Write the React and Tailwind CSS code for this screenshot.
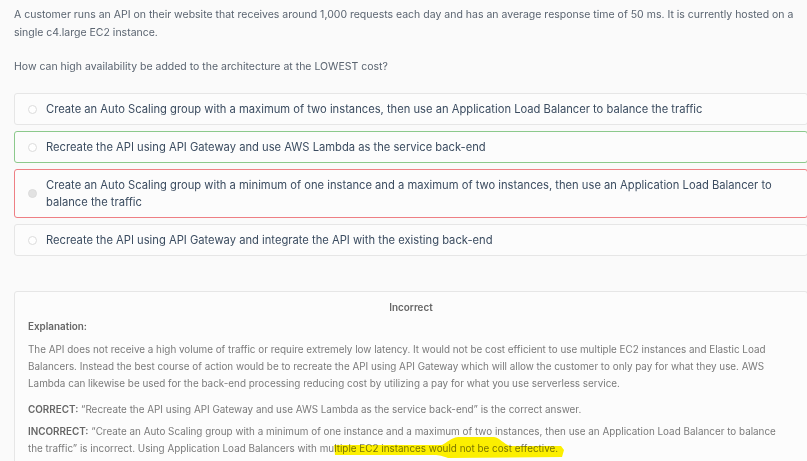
import React from 'react';

const options = [
    { text: 'Create an Auto Scaling group with a maximum of two instances, then use an Application Load Balancer to balance the traffic', state: 'none' },
    { text: 'Recreate the API using API Gateway and use AWS Lambda as the service back-end', state: 'correct' },
    { text: 'Create an Auto Scaling group with a minimum of one instance and a maximum of two instances, then use an Application Load Balancer to balance the traffic', state: 'wrong' },
    { text: 'Recreate the API using API Gateway and integrate the API with the existing back-end', state: 'none' },
];

const borderFor = {
    none: 'border-[#e6e6e6]',
    correct: 'border-[#8cc98c]',
    wrong: 'border-[#ee7f84]',
};

const App = () => {
    return (
        <div className="h-[461px] bg-[#fafafa] pl-[14px] pt-[6px] font-['Inter','Liberation_Sans',sans-serif] overflow-hidden">
            <p className="text-[10.5px] leading-[18px] text-[#5a6470] pr-2">
                A customer runs an API on their website that receives around 1,000 requests each day and has an average response time of 50 ms. It is currently hosted on a single c4.large EC2 instance.
            </p>
            <p className="mt-[16px] text-[10.5px] leading-[18px] text-[#5a6470]">
                How can high availability be added to the architecture at the LOWEST cost?
            </p>

            <div className="mt-[17px] flex flex-col gap-[6px] -mr-px">
                {options.map((o, i) => (
                    <div key={i} className={`flex items-center rounded-[3px] border bg-[#fcfcfc] pl-[13px] pr-4 py-[6.5px] ${borderFor[o.state]}`}>
                        <span className={`h-[9px] w-[9px] shrink-0 rounded-full border border-[#dcdcdc] ${o.state === 'wrong' ? 'bg-[#e2e2e2]' : 'bg-white'}`} />
                        <span className="ml-[9px] text-[11.2px] leading-[17px] text-[#3b4c60]">{o.text}</span>
                    </div>
                ))}
            </div>

            <div className="mt-[35px] border border-[#e6e6e6] rounded-[3px] bg-[#fcfcfc] pl-[13px] pr-[26px] pt-[7px] pb-6 -mr-px text-[9.9px] leading-[17px] text-[#7a7a7a]">
                <div className="text-center font-semibold text-[#666] pl-[13px]">Incorrect</div>
                <div className="mt-[2px] font-semibold text-[#666]">Explanation:</div>
                <p className="mt-[6px]">
                    The API does not receive a high volume of traffic or require extremely low latency. It would not be cost efficient to use multiple EC2 instances and Elastic Load Balancers. Instead the best course of action would be to recreate the API using API Gateway which will allow the customer to only pay for what they use. AWS Lambda can likewise be used for the back-end processing reducing cost by utilizing a pay for what you use serverless service.
                </p>
                <p className="mt-[9px]">
                    <span className="font-semibold text-[#666]">CORRECT:</span> “Recreate the API using API Gateway and use AWS Lambda as the service back-end” is the correct answer.
                </p>
                <p className="mt-[5px]">
                    <span className="font-semibold text-[#666]">INCORRECT:</span> “Create an Auto Scaling group with a minimum of one instance and a maximum of two instances, then use an Application Load Balancer to balance the traffic” is incorrect. Using Application Load Balancers with mu<span className="relative">ltiple EC2 instances would not be cost effective.
                        {/* marker stroke */}
                        <svg className="absolute left-0 top-[-8px] mix-blend-multiply pointer-events-none" width="232" height="26" viewBox="0 0 232 26">
                            <path d="M0 11 L108 11 C113 9 116 4 124 3 L160 3 C166 4 170 10 176 12 L227 12 L230 16 L228 23 L114 24 C108 22 106 21 100 21 L1 21 Z" fill="#fff200" />
                        </svg>
                    </span>
                </p>
            </div>
        </div>
    );
};

export default App;
